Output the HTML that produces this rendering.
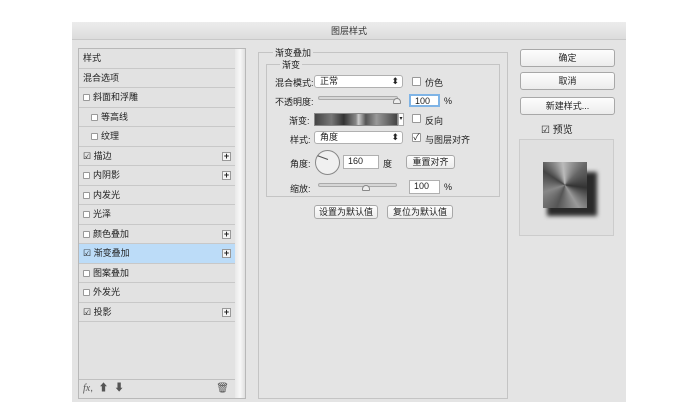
<!DOCTYPE html><html><head><meta charset="utf-8"><style>
*{box-sizing:border-box;margin:0;padding:0}
body{width:690px;height:402px;background:#fff;font-family:"Liberation Sans","Noto Sans CJK SC",sans-serif;font-size:9px;color:#222;position:relative;overflow:hidden}
.a{position:absolute}
.dlg{left:72px;top:22px;width:554px;height:380px;background:#e4e4e4}
.title{left:72px;top:22px;width:554px;height:18px;background:linear-gradient(#ececec,#dcdcdc);border-bottom:1px solid #c8c8c8;text-align:center;line-height:18px;font-size:9px;color:#333}
.list{left:78px;top:48px;width:168px;height:351px;border:1px solid #b8b8b8;background:#e2e2e2}
.row{position:absolute;left:0;width:156px;height:19.5px;border-bottom:1px solid #c8c8c8;line-height:19px;padding-left:4px}
.cb{display:inline-block;width:7px;height:7px;border:1px solid #999;background:#fff;vertical-align:-1px;margin-right:3px;border-radius:1px}
.plus{position:absolute;right:4px;top:5px;width:9px;height:9px;border:1px solid #999;background:#f4f4f4;font-size:9px;line-height:7px;text-align:center;font-weight:bold}
.sb{left:235px;top:49px;width:10px;height:349px;background:linear-gradient(90deg,#e8e8e8,#f8f8f8,#e0e0e0)}
.btn{position:absolute;border:1px solid #a8a8a8;border-radius:3px;background:linear-gradient(#fdfdfd,#ececec);text-align:center;font-size:9px}
.inp{position:absolute;background:#fff;border:1px solid #b0b0b0;height:13px;line-height:11px;padding-left:4px;font-size:9px}
.lbl{position:absolute;font-size:9px}
.sel{position:absolute;background:#fff;border:1px solid #b0b0b0;border-radius:3px;height:13px;line-height:11px;padding-left:5px}
.sl{position:absolute;height:4px;border:1px solid #aaa;background:#d6d6d6;border-radius:2px}
</style></head><body>
<div class="a dlg"></div>
<div class="a title">图层样式</div>
<div class="a list">
<div class="row" style="top:0">样式</div>
<div class="row" style="top:19.5px">混合选项</div>
<div class="row" style="top:39px"><span class="cb"></span>斜面和浮雕</div>
<div class="row" style="top:58.5px;padding-left:12px"><span class="cb"></span>等高线</div>
<div class="row" style="top:78px;padding-left:12px"><span class="cb"></span>纹理</div>
<div class="row" style="top:97.5px">☑ 描边<span class="plus">+</span></div>
<div class="row" style="top:117px"><span class="cb"></span>内阴影<span class="plus">+</span></div>
<div class="row" style="top:136.5px"><span class="cb"></span>内发光</div>
<div class="row" style="top:156px"><span class="cb"></span>光泽</div>
<div class="row" style="top:175.5px"><span class="cb"></span>颜色叠加<span class="plus">+</span></div>
<div class="row" style="top:195px;background:#bcdcf8">☑ 渐变叠加<span class="plus">+</span></div>
<div class="row" style="top:214.5px"><span class="cb"></span>图案叠加</div>
<div class="row" style="top:234px"><span class="cb"></span>外发光</div>
<div class="row" style="top:253.5px">☑ 投影<span class="plus">+</span></div>
<div class="a" style="left:0;top:330px;width:156px;height:20px;border-top:1px solid #c0c0c0;font-size:10px;line-height:18px;padding-left:4px;color:#555"><i style="font-family:'Liberation Serif',serif">fx</i>, &nbsp;⬆ &nbsp;⬇<span style="position:absolute;right:6px">🗑</span></div>
</div>
<div class="a sb"></div>
<div class="a" style="left:258px;top:52px;width:250px;height:347px;border:1px solid #c4c4c4"></div>
<div class="lbl" style="left:273px;top:46px;background:#e4e4e4;padding:0 2px">渐变叠加</div>
<div class="a" style="left:266px;top:64px;width:234px;height:133px;border:1px solid #c4c4c4"></div>
<div class="lbl" style="left:280px;top:58px;background:#e4e4e4;padding:0 2px">渐变</div>
<div class="lbl" style="left:275px;top:76px">混合模式:</div>
<div class="sel" style="left:314px;top:75px;width:89px">正常<span style="position:absolute;right:3px">⬍</span></div>
<div class="a cb" style="left:412px;top:77px;width:9px;height:9px"></div><div class="lbl" style="left:425px;top:76px">仿色</div>
<div class="lbl" style="left:275px;top:95px">不透明度:</div>
<div class="sl" style="left:318px;top:96px;width:80px"></div>
<div class="a" style="left:393px;top:98px;width:8px;height:6px;border:1px solid #888;border-radius:4px 4px 1px 1px;background:#eee"></div>
<div class="inp" style="left:409px;top:94px;width:31px;border:2px solid #7fb4e6">100</div><div class="lbl" style="left:444px;top:96px">%</div>
<div class="lbl" style="left:289px;top:114px">渐变:</div>
<div class="a" style="left:314px;top:113px;width:84px;height:13px;background:linear-gradient(90deg,#444,#777 20%,#333 35%,#888 50%,#ccc 53%,#555 62%,#999 75%,#444);border:1px solid #888"></div>
<div class="a" style="left:398px;top:113px;width:6px;height:13px;background:#fff;border:1px solid #aaa;font-size:6px;line-height:11px;text-align:center">▾</div>
<div class="a cb" style="left:412px;top:114px;width:9px;height:9px"></div><div class="lbl" style="left:425px;top:114px">反向</div>
<div class="lbl" style="left:290px;top:133px">样式:</div>
<div class="sel" style="left:314px;top:131px;width:89px">角度<span style="position:absolute;right:3px">⬍</span></div>
<div class="a cb" style="left:412px;top:133px;width:9px;height:9px;font-size:9px;line-height:7px;text-align:center">✓</div><div class="lbl" style="left:425px;top:133px">与图层对齐</div>
<div class="lbl" style="left:290px;top:157px">角度:</div>
<div class="a" style="left:315px;top:150px;width:25px;height:25px;border:1px solid #888;border-radius:50%;background:#f0f0f0"></div>
<div class="a" style="left:317px;top:159px;width:11px;height:1px;background:#555;transform:rotate(20deg);transform-origin:right"></div>
<div class="inp" style="left:343px;top:155px;width:36px;height:14px">160</div><div class="lbl" style="left:383px;top:157px">度</div>
<div class="btn" style="left:406px;top:155px;width:49px;height:14px;line-height:12px">重置对齐</div>
<div class="lbl" style="left:290px;top:182px">缩放:</div>
<div class="sl" style="left:318px;top:183px;width:79px"></div>
<div class="a" style="left:362px;top:185px;width:8px;height:6px;border:1px solid #888;border-radius:4px 4px 1px 1px;background:#eee"></div>
<div class="inp" style="left:409px;top:180px;width:31px;height:14px">100</div><div class="lbl" style="left:444px;top:182px">%</div>
<div class="btn" style="left:314px;top:205px;width:64px;height:14px;line-height:12px">设置为默认值</div>
<div class="btn" style="left:387px;top:205px;width:66px;height:14px;line-height:12px">复位为默认值</div>
<div class="btn" style="left:520px;top:49px;width:95px;height:18px;line-height:16px">确定</div>
<div class="btn" style="left:520px;top:72px;width:95px;height:18px;line-height:16px">取消</div>
<div class="btn" style="left:520px;top:97px;width:95px;height:18px;line-height:16px">新建样式...</div>
<div class="lbl" style="left:541px;top:121px;font-size:10px">☑ 预览</div>
<div class="a" style="left:519px;top:139px;width:95px;height:97px;border:1px solid #ccc;background:#e0e0e0"></div>
<div class="a" style="left:547px;top:172px;width:50px;height:44px;background:#2a2a2a;filter:blur(2px)"></div>
<div class="a" style="left:543px;top:162px;width:44px;height:46px;background:conic-gradient(from 200deg,#555,#888,#444,#bbb,#666,#333,#999,#555)"></div>
</body></html>
